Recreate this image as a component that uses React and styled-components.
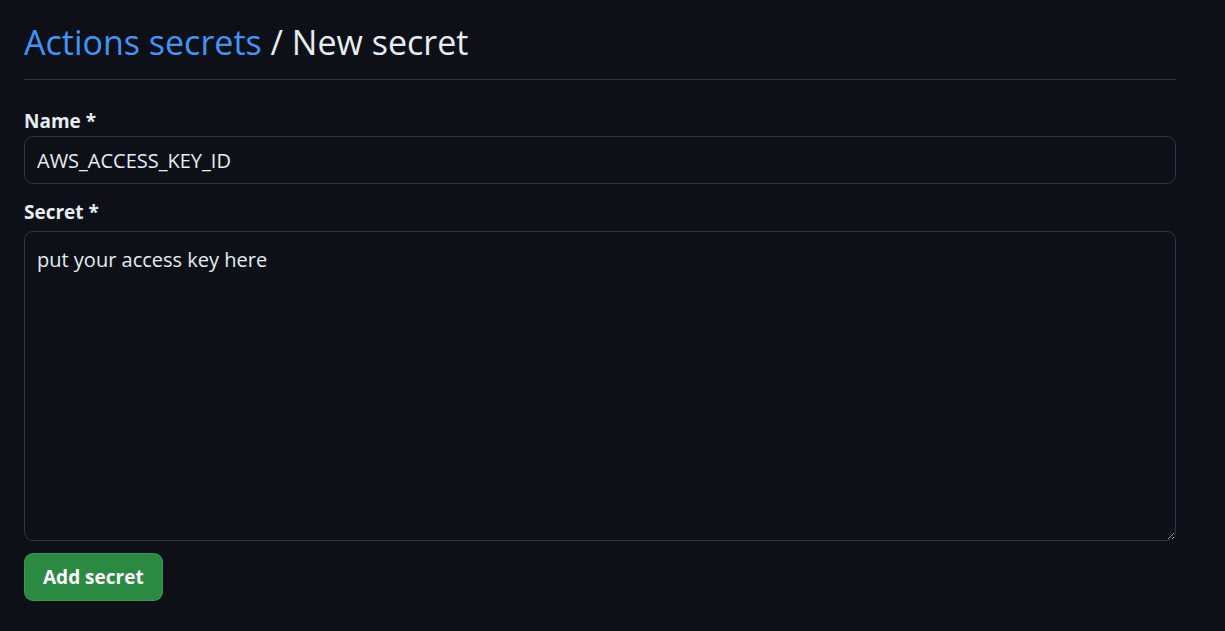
import styled, { createGlobalStyle } from "styled-components"

const GlobalStyle = createGlobalStyle`
  html, body {
    margin: 0;
    background: #0d1117;
    color: #e6edf3;
    font-family: "Open Sans", "Noto Sans", sans-serif;
  }
`

const Page = styled.div`
  padding: 18px 49px 0 24px;
  display: flex;
  flex-direction: column;
`

const Header = styled.h1`
  margin: 0;
  padding-bottom: 13px;
  border-bottom: 1px solid #30363d;
  font-size: 34px;
  font-weight: 400;
  line-height: 48px;
  color: #e6edf3;
`

const Crumb = styled.a`
  color: #4493f8;
  text-decoration: none;
`

const Form = styled.form`
  display: flex;
  flex-direction: column;
  padding-top: 29px;
`

const Field = styled.div`
  display: flex;
  flex-direction: column;
  margin-bottom: ${(p) => p.$gap}px;
`

const Label = styled.label`
  font-size: 19px;
  font-weight: 700;
  line-height: 24px;
  margin-bottom: ${(p) => p.$gap}px;
`

const Input = styled.input`
  box-sizing: border-box;
  height: 48px;
  padding: 0 12px;
  background: #0d1117;
  color: #e6edf3;
  border: 1px solid #30363d;
  border-radius: 9px;
  font-family: inherit;
  font-size: 20px;
  outline: none;
`

const TextArea = styled.textarea`
  box-sizing: border-box;
  height: 310px;
  padding: 14px 12px;
  background: #0d1117;
  color: #e6edf3;
  border: 1px solid #30363d;
  border-radius: 9px;
  font-family: inherit;
  font-size: 20px;
  line-height: 28px;
  resize: vertical;
  outline: none;
`

const Button = styled.button`
  align-self: flex-start;
  height: 48px;
  padding: 0 18px;
  background: #2a8a42;
  color: #ffffff;
  border: 1px solid rgba(240, 246, 252, 0.1);
  border-radius: 9px;
  font-family: inherit;
  font-size: 19px;
  font-weight: 700;
  cursor: pointer;
`

export default function App() {
  return (
    <>
      <GlobalStyle />
      <Page>
        <Header>
          <Crumb href="#">Actions secrets</Crumb> / New secret
        </Header>
        <Form onSubmit={(e) => e.preventDefault()}>
          <Field $gap={16}>
            <Label htmlFor="name" $gap={3}>Name *</Label>
            <Input id="name" defaultValue="AWS_ACCESS_KEY_ID" />
          </Field>
          <Field $gap={12}>
            <Label htmlFor="secret" $gap={7}>Secret *</Label>
            <TextArea id="secret" defaultValue="put your access key here" />
          </Field>
          <Button type="submit">Add secret</Button>
        </Form>
      </Page>
    </>
  )
}
